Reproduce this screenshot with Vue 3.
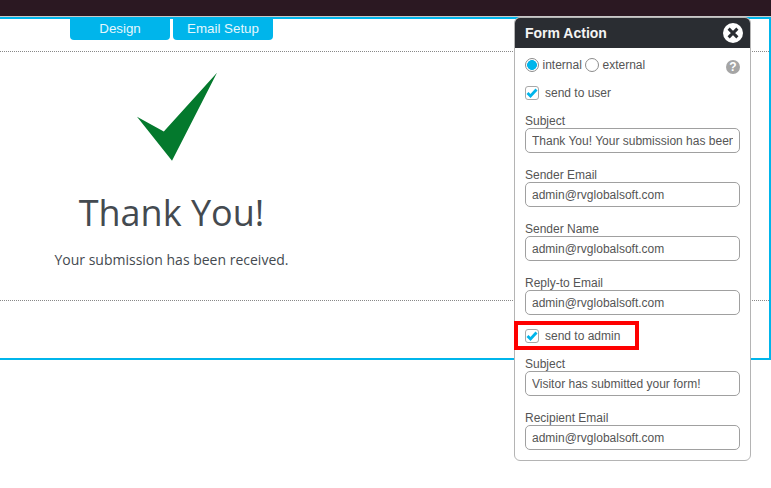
<script setup>
const groups = [
  { label: 'Subject', value: 'Thank You! Your submission has been received.' },
  { label: 'Sender Email', value: 'admin@rvglobalsoft.com' },
  { label: 'Sender Name', value: 'admin@rvglobalsoft.com' },
  { label: 'Reply-to Email', value: 'admin@rvglobalsoft.com' },
]
const adminGroups = [
  { label: 'Subject', value: 'Visitor has submitted your form!' },
  { label: 'Recipient Email', value: 'admin@rvglobalsoft.com' },
]
</script>

<template>
  <div class="page">
    <div class="topbar"></div>
    <div class="stage">
      <div class="tabs">
        <div class="tab">Design</div>
        <div class="tab">Email Setup</div>
      </div>
      <div class="canvas">
        <svg class="tick" width="82" height="90" viewBox="0 0 82 90">
          <path d="M1 44.8 L27.8 59.6 L81 0.8 L36 88.8 Z" fill="#04792d" />
        </svg>
        <h1 class="title">Thank You!</h1>
        <p class="sub">Your submission has been received.</p>
      </div>
    </div>

    <aside class="panel">
      <header class="panel-head">
        <span class="panel-title">Form Action</span>
        <svg class="close" width="20" height="20" viewBox="0 0 20 20">
          <circle cx="10" cy="10" r="10" fill="#fff" />
          <path d="M5.6 5.6 L14.4 14.4 M14.4 5.6 L5.6 14.4" stroke="#2a2d32" stroke-width="3" />
        </svg>
      </header>
      <div class="panel-body">
        <div class="radios">
          <span class="radio on"></span>
          <span class="radio-label">internal</span>
          <span class="radio"></span>
          <span class="radio-label">external</span>
          <span class="help">?</span>
        </div>
        <div class="check-row user">
          <span class="check">
            <svg width="12" height="10" viewBox="0 0 12 10"><path d="M1.5 5 L4.5 8 L10.5 1.5" fill="none" stroke="#00b5eb" stroke-width="2.8" /></svg>
          </span>
          <span class="check-label">send to user</span>
        </div>
        <div v-for="g in groups" :key="g.label" class="field">
          <label class="field-label">{{ g.label }}</label>
          <input class="input" readonly :value="g.value" />
        </div>
        <div class="check-row admin">
          <span class="check">
            <svg width="12" height="10" viewBox="0 0 12 10"><path d="M1.5 5 L4.5 8 L10.5 1.5" fill="none" stroke="#00b5eb" stroke-width="2.8" /></svg>
          </span>
          <span class="check-label">send to admin</span>
          <span class="highlight"></span>
        </div>
        <div v-for="g in adminGroups" :key="g.label" class="field">
          <label class="field-label">{{ g.label }}</label>
          <input class="input" readonly :value="g.value" />
        </div>
      </div>
    </aside>
  </div>
</template>

<style>
html, body { margin: 0; background: #fff; }
</style>

<style scoped>
.page {
  position: relative;
  width: 771px;
  height: 488px;
  overflow: hidden;
  background: #fff;
  font-family: "Liberation Sans", Arial, sans-serif;
}
.topbar {
  height: 16px;
  background: #2b1822;
  border-bottom: 1px solid #c9c9c9;
}
.stage {
  box-sizing: border-box;
  width: 771px;
  height: 343px;
  border: solid #00b5eb;
  border-width: 2px 2px 2px 0;
}
.tabs {
  display: flex;
  gap: 3px;
  padding-left: 70px;
  height: 32px;
  border-bottom: 1px dotted #888;
}
.tab {
  box-sizing: border-box;
  width: 100px;
  height: 21px;
  background: #00b5eb;
  color: #e4f7fd;
  border-radius: 0 0 4px 4px;
  font-size: 13.33px;
  line-height: 20px;
  text-align: center;
}
.canvas {
  box-sizing: border-box;
  width: 769px;
  height: 249px;
  border-bottom: 1px dotted #888;
  padding: 20px 0 0 0;
}
.tick {
  display: block;
  margin-left: 136px;
}
.title {
  margin: 26px 0 0;
  width: 343px;
  text-align: center;
  font-family: "Open Sans", sans-serif;
  font-weight: 400;
  font-size: 36px;
  line-height: 49px;
  color: #444a50;
}
.sub {
  margin: 13px 0 0;
  width: 343px;
  text-align: center;
  font-family: "Open Sans", sans-serif;
  font-size: 14px;
  line-height: 20px;
  color: #444a50;
}
.panel {
  position: absolute;
  left: 514px;
  top: 17px;
  box-sizing: border-box;
  width: 237px;
  height: 444px;
  background: #fff;
  border: 1px solid #b4b4b4;
  border-radius: 6px;
}
.panel-head {
  display: flex;
  align-items: center;
  justify-content: space-between;
  box-sizing: border-box;
  height: 30px;
  padding: 0 7px 0 10px;
  background: #2a2d32;
  border-radius: 5px 5px 0 0;
}
.panel-title {
  color: #f4f4f4;
  font-size: 14px;
  font-weight: 700;
}
.close { display: block; }
.panel-body {
  padding: 0 10px;
  color: #555;
}
.radios {
  position: relative;
  display: flex;
  align-items: center;
  height: 15px;
  padding-top: 9px;
}
.radio {
  box-sizing: border-box;
  flex: none;
  width: 14px;
  height: 14px;
  border-radius: 50%;
  border: 1px solid #8c8c8c;
  background: #fff;
}
.radio.on {
  background: radial-gradient(circle, #00b5eb 0, #00b5eb 4.6px, #fff 5.2px);
}
.radio-label {
  font-size: 12px;
  margin: 1px 0 0 3.5px;
  width: 42.5px;
  color: #555;
  white-space: nowrap;
}
.help {
  position: absolute;
  right: 0;
  top: 12px;
  width: 14px;
  height: 14px;
  border-radius: 50%;
  background: #a5a5a5;
  color: #fff;
  font-size: 12px;
  font-weight: 700;
  line-height: 14px;
  text-align: center;
}
.check-row {
  position: relative;
  display: flex;
  align-items: center;
  height: 14px;
}
.check-row.user { margin-top: 14px; }
.check-row.admin { margin-top: 14px; }
.check {
  box-sizing: border-box;
  display: flex;
  align-items: center;
  justify-content: center;
  width: 14px;
  height: 14px;
  border: 1px solid #a8a8a8;
  border-radius: 3px;
  background: #fff;
}
.check-label {
  margin-left: 6px;
  font-size: 12px;
  color: #555;
}
.highlight {
  position: absolute;
  left: -11px;
  top: -8px;
  width: 125px;
  height: 29px;
  box-sizing: border-box;
  border: 4px solid #fe0000;
}
.field { margin-top: 15px; }
.check-row.user + .field { margin-top: 14px; }
.check-row.admin + .field { margin-top: 14px; }
.field-label {
  display: block;
  font-size: 12px;
  line-height: 14px;
  color: #555;
}
.input {
  display: block;
  box-sizing: border-box;
  width: 215px;
  height: 25px;
  margin: 0;
  padding: 0 6px;
  border: 1px solid #a0a0a0;
  border-radius: 5px;
  outline: none;
  background: #fff;
  font-family: "Liberation Sans", Arial, sans-serif;
  font-size: 12px;
  color: #555;
}
</style>
